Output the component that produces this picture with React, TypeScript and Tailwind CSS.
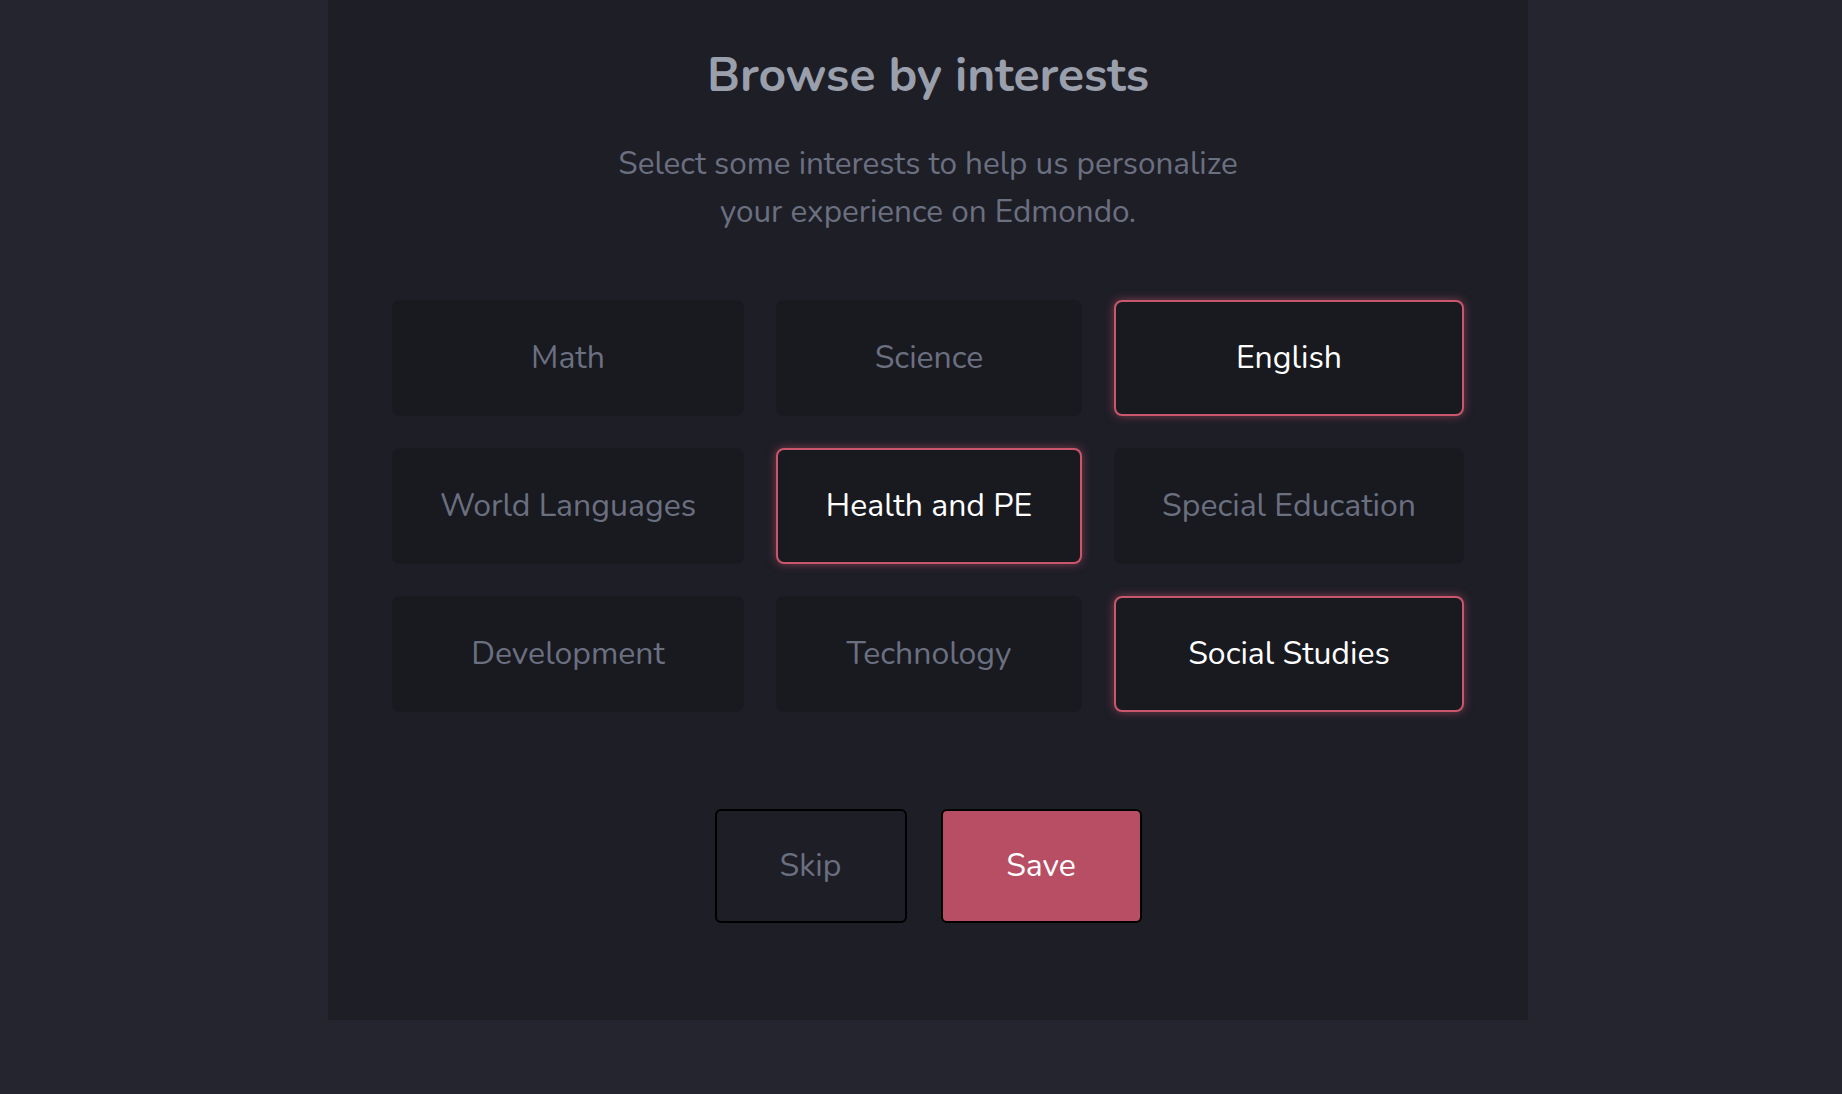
import React, { useState } from "react";

const INTERESTS = [
  "Math",
  "Science",
  "English",
  "World Languages",
  "Health and PE",
  "Special Education",
  "Development",
  "Technology",
  "Social Studies",
];

export default function App() {
  const [picked, setPicked] = useState<Record<string, boolean>>({
    English: true,
    "Health and PE": true,
    "Social Studies": true,
  });

  const toggle = (name: string) =>
    setPicked((prev) => ({ ...prev, [name]: !prev[name] }));

  return (
    <div
      className="min-h-screen bg-[#252530] text-[#6b7080]"
      style={{ fontFamily: '"Nunito", "Lato", "Noto Sans", sans-serif' }}
    >
      <div className="ml-[328px] w-[1200px] h-[1020px] bg-[#1e1e27] flex flex-col items-center">
        <h1 className="pt-[47px] text-[48px] leading-[56px] font-bold text-[#9a9fac]">
          Browse by interests
        </h1>
        <p className="mt-[37px] text-[31.5px] leading-[48px] text-center text-[#6b7080]">
          Select some interests to help us personalize
          <br />
          your experience on Edmondo.
        </p>

        {/* interests grid */}
        <div className="mt-[64px] grid grid-cols-[352px_306px_350px] gap-x-8 gap-y-[32px]">
          {INTERESTS.map((name) => {
            const on = !!picked[name];
            return (
              <button
                key={name}
                onClick={() => toggle(name)}
                className={
                  on
                    ? "h-[116px] rounded-lg bg-[#191920] border-2 border-[#c9566b] shadow-[0_0_10px_rgba(201,86,107,0.55)] text-[32px] text-white"
                    : "h-[116px] rounded-lg bg-[#191920] border-2 border-transparent text-[32px] text-[#6b7080]"
                }
              >
                {name}
              </button>
            );
          })}
        </div>

        <div className="mt-[97px] flex gap-[34px]">
          <button className="w-[192px] h-[114px] rounded-md border-2 border-black bg-[#1e1e27] text-[32px] text-[#6b7080]">
            Skip
          </button>
          <button className="w-[201px] h-[114px] rounded-md border-2 border-black bg-[#b84e63] text-[32px] text-white">
            Save
          </button>
        </div>
      </div>
    </div>
  );
}
